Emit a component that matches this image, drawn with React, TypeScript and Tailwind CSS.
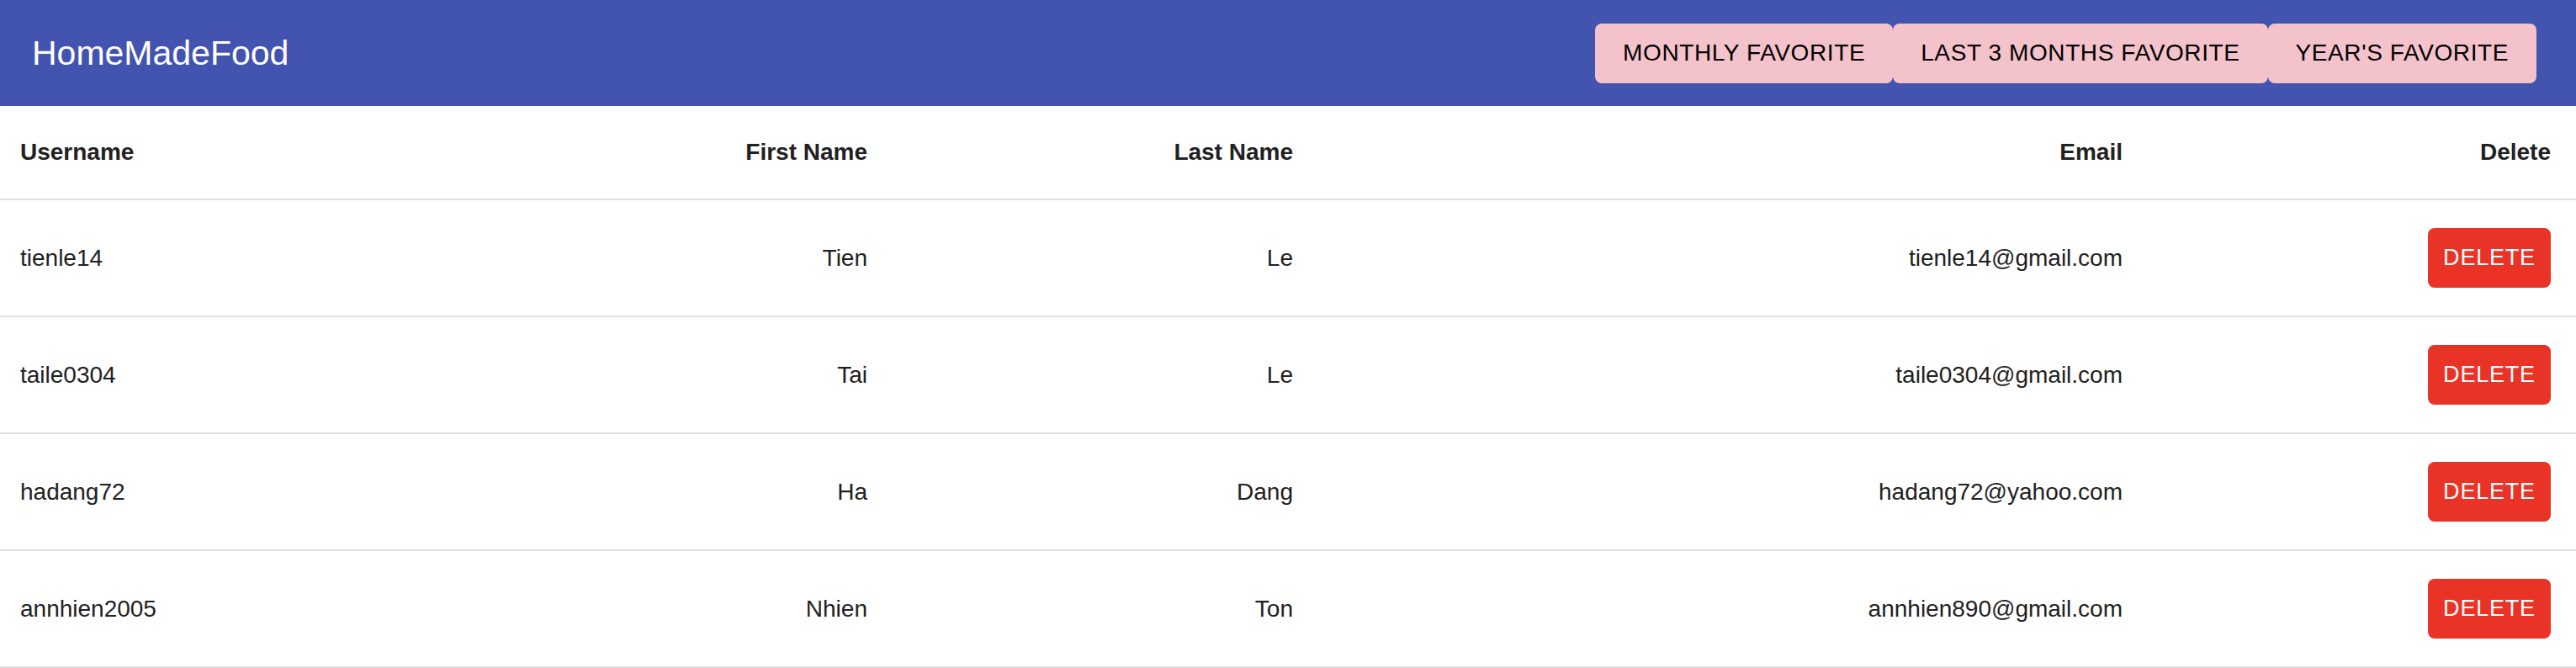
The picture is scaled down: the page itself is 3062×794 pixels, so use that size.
const users = [
  { username: 'tienle14', first: 'Tien', last: 'Le', email: 'tienle14@gmail.com' },
  { username: 'taile0304', first: 'Tai', last: 'Le', email: 'taile0304@gmail.com' },
  { username: 'hadang72', first: 'Ha', last: 'Dang', email: 'hadang72@yahoo.com' },
  { username: 'annhien2005', first: 'Nhien', last: 'Ton', email: 'annhien890@gmail.com' },
];

const font = { fontFamily: '"Liberation Sans", Arial, Helvetica, sans-serif' };

function NavButton({ label }: { label: string }) {
  return (
    <button className="h-[71px] px-[33px] rounded-[8px] bg-[#f4c2cb] text-[28px] text-black uppercase tracking-[0.6px] leading-none">
      {label}
    </button>
  );
}

const row = 'grid grid-cols-[540px_521px_506px_986px_1fr] items-center border-b-2 border-[#e0e0e0]';
const cell = 'pl-[24px] pr-[30px]';

export default function App() {
  return (
    <div className="w-[3062px] h-[794px] bg-white overflow-hidden" style={font}>
      {/* App bar */}
      <header className="h-[126px] bg-[#4253b0] flex items-center pl-[38px] pr-[47px]">
        <h1 className="flex-1 text-[41px] text-white font-normal leading-none">HomeMadeFood</h1>
        <div className="flex">
          <NavButton label="Monthly Favorite" />
          <NavButton label="Last 3 Months Favorite" />
          <NavButton label="Year's Favorite" />
        </div>
      </header>

      {/* Users table */}
      <div className={`${row} h-[112px] text-[28px] font-bold text-[#212121]`}>
        <div className={cell}>Username</div>
        <div className={`${cell} text-right`}>First Name</div>
        <div className={`${cell} text-right`}>Last Name</div>
        <div className={`${cell} text-right`}>Email</div>
        <div className={`${cell} text-right`}>Delete</div>
      </div>
      {users.map((u) => (
        <div key={u.username} className={`${row} h-[139px] text-[28px] text-[#212121]`}>
          <div className={cell}>{u.username}</div>
          <div className={`${cell} text-right`}>{u.first}</div>
          <div className={`${cell} text-right`}>{u.last}</div>
          <div className={`${cell} text-right`}>{u.email}</div>
          <div className={`${cell} flex justify-end`}>
            <button className="h-[71px] w-[146px] rounded-[8px] bg-[#e83326] text-white text-[27px] tracking-[0.8px] leading-none">
              DELETE
            </button>
          </div>
        </div>
      ))}
    </div>
  );
}
